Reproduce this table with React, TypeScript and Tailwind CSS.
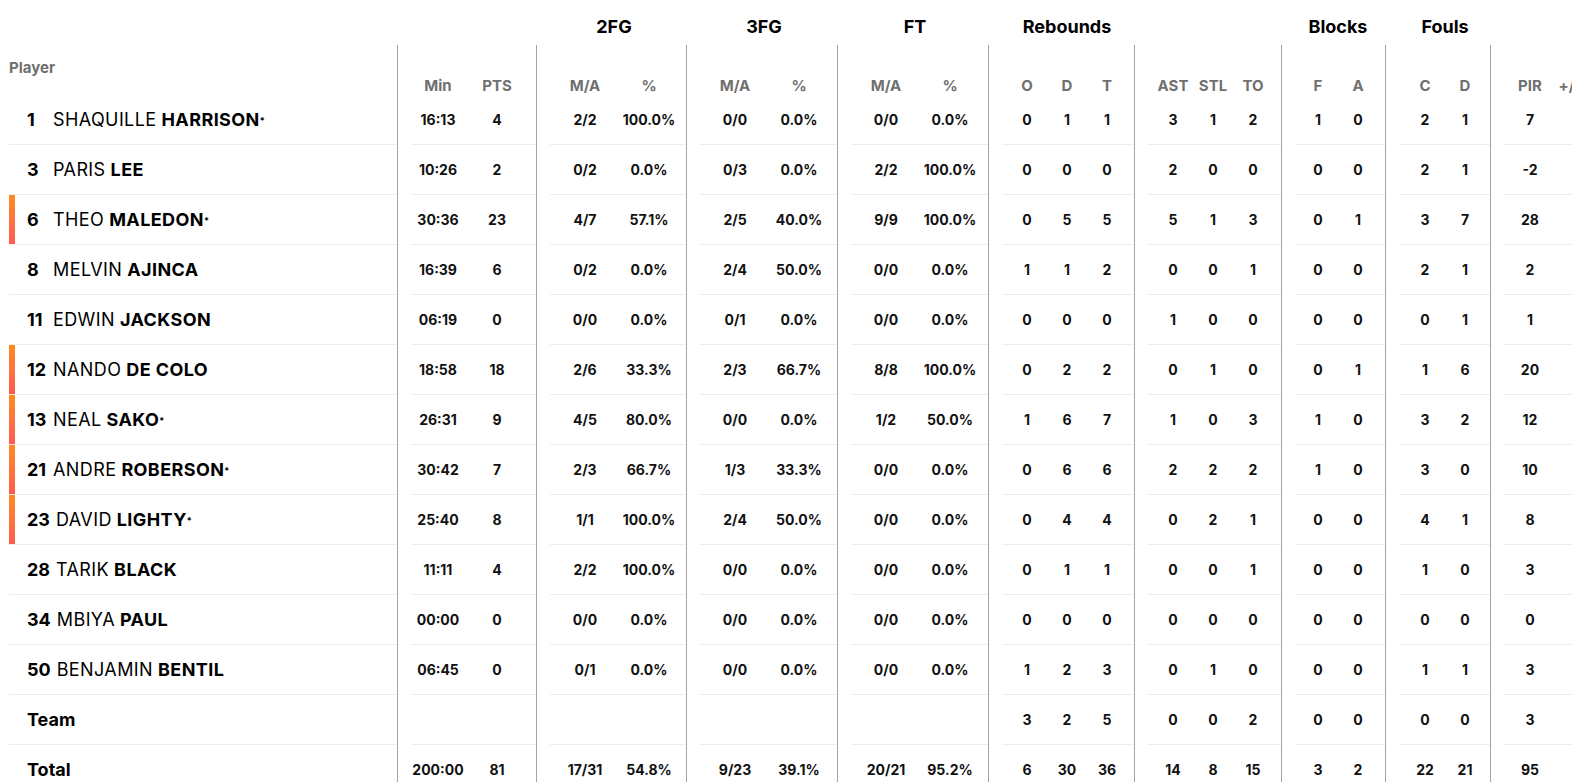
type Group = { title: string; w: string; pad: string; span: string; cols: string[]; labels: string[] };

const groups: Group[] = [
  { title: "", w: "w-[139px]", pad: "pl-0", span: "w-[118px]", cols: ["w-[54px]", "w-[64px]"], labels: ["Min", "PTS"] },
  { title: "2FG", w: "w-[150px]", pad: "pl-0", span: "w-[128px]", cols: ["w-[70px]", "w-[58px]"], labels: ["M/A", "%"] },
  { title: "3FG", w: "w-[151px]", pad: "pl-0", span: "w-[128px]", cols: ["w-[70px]", "w-[58px]"], labels: ["M/A", "%"] },
  { title: "FT", w: "w-[151px]", pad: "pl-0", span: "w-[128px]", cols: ["w-[70px]", "w-[58px]"], labels: ["M/A", "%"] },
  { title: "Rebounds", w: "w-[146px]", pad: "pl-[5px]", span: "w-[120px]", cols: ["w-[40px]", "w-[40px]", "w-[40px]"], labels: ["O", "D", "T"] },
  { title: "", w: "w-[147px]", pad: "pl-[5px]", span: "w-[120px]", cols: ["w-[40px]", "w-[40px]", "w-[40px]"], labels: ["AST", "STL", "TO"] },
  { title: "Blocks", w: "w-[104px]", pad: "pl-[3px]", span: "w-[80px]", cols: ["w-[40px]", "w-[40px]"], labels: ["F", "A"] },
  { title: "Fouls", w: "w-[105px]", pad: "pl-[6px]", span: "w-[80px]", cols: ["w-[40px]", "w-[40px]"], labels: ["C", "D"] },
  { title: "", w: "w-[140px]", pad: "pl-[6px]", span: "w-[80px]", cols: ["w-[40px]", "w-[40px]"], labels: ["PIR", "+/-"] },
];

type Row = { num?: string; first?: string; last: string; starter?: boolean; bar?: boolean; stats: string[][] };

const rows: Row[] = [
  { num: "1", first: "SHAQUILLE", last: "HARRISON", starter: true, stats: [["16:13", "4"], ["2/2", "100.0%"], ["0/0", "0.0%"], ["0/0", "0.0%"], ["0", "1", "1"], ["3", "1", "2"], ["1", "0"], ["2", "1"], ["7", ""]] },
  { num: "3", first: "PARIS", last: "LEE", stats: [["10:26", "2"], ["0/2", "0.0%"], ["0/3", "0.0%"], ["2/2", "100.0%"], ["0", "0", "0"], ["2", "0", "0"], ["0", "0"], ["2", "1"], ["-2", ""]] },
  { num: "6", first: "THEO", last: "MALEDON", starter: true, bar: true, stats: [["30:36", "23"], ["4/7", "57.1%"], ["2/5", "40.0%"], ["9/9", "100.0%"], ["0", "5", "5"], ["5", "1", "3"], ["0", "1"], ["3", "7"], ["28", ""]] },
  { num: "8", first: "MELVIN", last: "AJINCA", stats: [["16:39", "6"], ["0/2", "0.0%"], ["2/4", "50.0%"], ["0/0", "0.0%"], ["1", "1", "2"], ["0", "0", "1"], ["0", "0"], ["2", "1"], ["2", ""]] },
  { num: "11", first: "EDWIN", last: "JACKSON", stats: [["06:19", "0"], ["0/0", "0.0%"], ["0/1", "0.0%"], ["0/0", "0.0%"], ["0", "0", "0"], ["1", "0", "0"], ["0", "0"], ["0", "1"], ["1", ""]] },
  { num: "12", first: "NANDO", last: "DE COLO", bar: true, stats: [["18:58", "18"], ["2/6", "33.3%"], ["2/3", "66.7%"], ["8/8", "100.0%"], ["0", "2", "2"], ["0", "1", "0"], ["0", "1"], ["1", "6"], ["20", ""]] },
  { num: "13", first: "NEAL", last: "SAKO", starter: true, bar: true, stats: [["26:31", "9"], ["4/5", "80.0%"], ["0/0", "0.0%"], ["1/2", "50.0%"], ["1", "6", "7"], ["1", "0", "3"], ["1", "0"], ["3", "2"], ["12", ""]] },
  { num: "21", first: "ANDRE", last: "ROBERSON", starter: true, bar: true, stats: [["30:42", "7"], ["2/3", "66.7%"], ["1/3", "33.3%"], ["0/0", "0.0%"], ["0", "6", "6"], ["2", "2", "2"], ["1", "0"], ["3", "0"], ["10", ""]] },
  { num: "23", first: "DAVID", last: "LIGHTY", starter: true, bar: true, stats: [["25:40", "8"], ["1/1", "100.0%"], ["2/4", "50.0%"], ["0/0", "0.0%"], ["0", "4", "4"], ["0", "2", "1"], ["0", "0"], ["4", "1"], ["8", ""]] },
  { num: "28", first: "TARIK", last: "BLACK", stats: [["11:11", "4"], ["2/2", "100.0%"], ["0/0", "0.0%"], ["0/0", "0.0%"], ["0", "1", "1"], ["0", "0", "1"], ["0", "0"], ["1", "0"], ["3", ""]] },
  { num: "34", first: "MBIYA", last: "PAUL", stats: [["00:00", "0"], ["0/0", "0.0%"], ["0/0", "0.0%"], ["0/0", "0.0%"], ["0", "0", "0"], ["0", "0", "0"], ["0", "0"], ["0", "0"], ["0", ""]] },
  { num: "50", first: "BENJAMIN", last: "BENTIL", stats: [["06:45", "0"], ["0/1", "0.0%"], ["0/0", "0.0%"], ["0/0", "0.0%"], ["1", "2", "3"], ["0", "1", "0"], ["0", "0"], ["1", "1"], ["3", ""]] },
  { last: "Team", stats: [["", ""], ["", ""], ["", ""], ["", ""], ["3", "2", "5"], ["0", "0", "2"], ["0", "0"], ["0", "0"], ["3", ""]] },
  { last: "Total", stats: [["200:00", "81"], ["17/31", "54.8%"], ["9/23", "39.1%"], ["20/21", "95.2%"], ["6", "30", "36"], ["14", "8", "15"], ["3", "2"], ["22", "21"], ["95", ""]] },
];

function PlayerCell({ row }: { row: Row }) {
  return (
    <div className="w-[397px] shrink-0 pl-[9px] flex">
      <div className="flex-1 flex items-center border-b border-[#ededed]">
        <div className={"w-[6px] self-stretch " + (row.bar ? "bg-linear-to-b from-[#ff8a1c] to-[#ff5a4f]" : "")} />
        <div className="pl-[12px] text-[18px] tracking-[0.4px] text-black whitespace-nowrap flex items-center">
          {row.num ? (
            <>
              <span className="inline-block min-w-[20px] font-bold tracking-normal">{row.num}</span>
              <span className="ml-[6px] font-normal">{row.first}</span>
              <span className="ml-[5px] font-bold">{row.last}</span>
              {row.starter && <span className="text-[9px] font-bold relative top-[1px]">*</span>}
            </>
          ) : (
            <span className="font-bold tracking-normal">{row.last}</span>
          )}
        </div>
      </div>
    </div>
  );
}

function StatRow({ row }: { row: Row }) {
  return (
    <div className="flex h-[50px]">
      <PlayerCell row={row} />
      {groups.map((g, gi) => (
        <div key={gi} className={g.w + " shrink-0 flex border-l border-[#a3a3a3] pl-[13px]"}>
          <div className={"flex-1 flex items-center border-b border-[#ededed] " + g.pad}>
            {g.cols.map((c, ci) => (
              <div key={ci} className={c + " shrink-0 text-center text-[14px] font-bold text-[#111]"}>
                {row.stats[gi][ci]}
              </div>
            ))}
          </div>
        </div>
      ))}
    </div>
  );
}

export default function App() {
  return (
    <div className="w-full overflow-hidden bg-white font-['Inter',sans-serif]">
      <div className="w-[1630px]">
        <div className="flex h-[45px]">
          <div className="w-[397px] shrink-0" />
          {groups.map((g, gi) => (
            <div key={gi} className={g.w + " shrink-0 flex items-end border-l border-transparent pl-[13px] pb-[7px]"}>
              <div className={"flex " + g.pad}>
                <div className={g.span + " text-center text-[18px] leading-[22px] font-bold text-black"}>{g.title}</div>
              </div>
            </div>
          ))}
        </div>
        <div className="flex h-[50px]">
          <div className="w-[397px] shrink-0 pl-[9px] pt-[15px]">
            <span className="block text-[15px] leading-[16px] font-bold text-[#707070]">Player</span>
          </div>
          {groups.map((g, gi) => (
            <div key={gi} className={g.w + " shrink-0 flex border-l border-[#a3a3a3] pl-[13px] pt-[33px]"}>
              <div className={"flex " + g.pad}>
                {g.cols.map((c, ci) => (
                  <div key={ci} className={c + " shrink-0 text-center text-[15px] leading-[16px] font-bold text-[#707070] whitespace-nowrap"}>
                    {g.labels[ci]}
                  </div>
                ))}
              </div>
            </div>
          ))}
        </div>
        {rows.map((r, i) => (
          <StatRow key={i} row={r} />
        ))}
      </div>
    </div>
  );
}
